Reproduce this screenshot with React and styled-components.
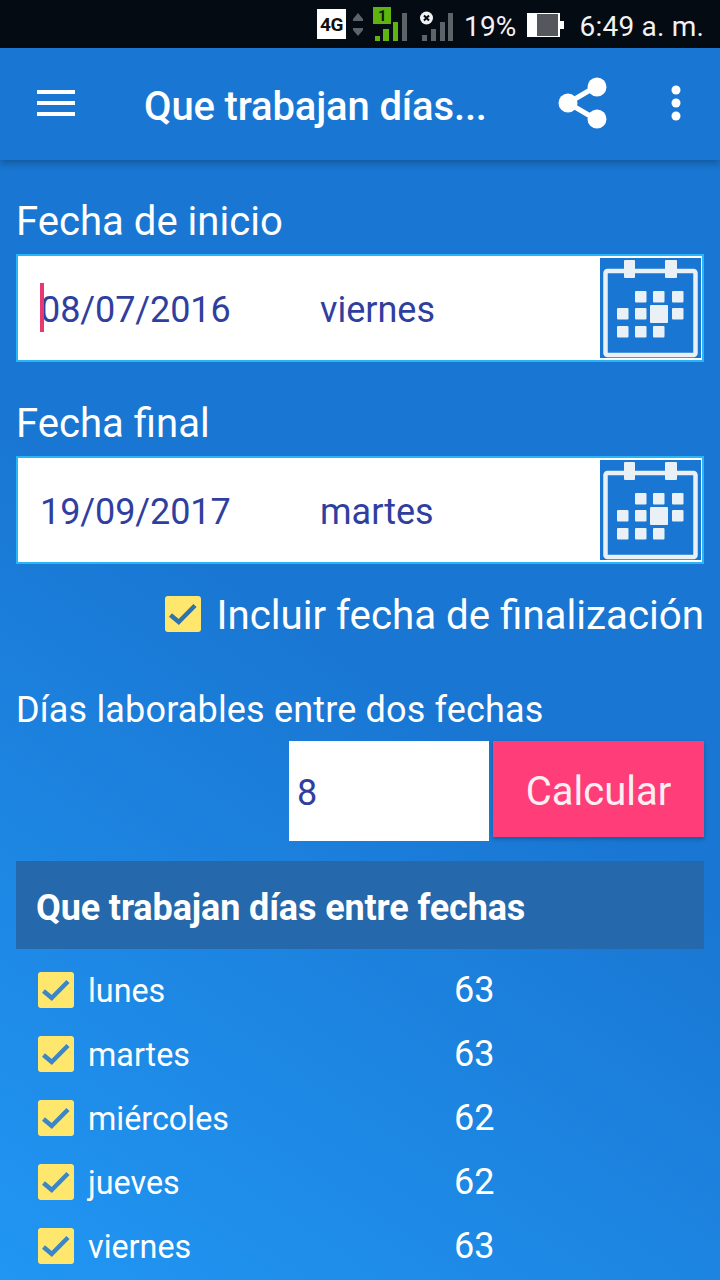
import styled, { createGlobalStyle } from "styled-components";

const Global = createGlobalStyle`
  html, body {
    margin: 0;
    padding: 0;
    background: #1976d2;
  }
  * { box-sizing: border-box; }
`;

const Screen = styled.div`
  width: 720px;
  height: 1280px;
  overflow: hidden;
  display: flex;
  flex-direction: column;
  font-family: Roboto, "Liberation Sans", sans-serif;
  color: #fff;
  background: linear-gradient(34deg, #2196f3 0%, #1976d2 50%, #1976d2 100%);
`;

const StatusBar = styled.div`
  height: 48px;
  flex: none;
  background: #050b13;
  display: flex;
  align-items: center;
  justify-content: flex-end;
  padding-right: 16px;
  color: #f2f2f2;
  font-size: 28px;
  letter-spacing: 0.2px;
`;

const NetBadge = styled.div`
  width: 29px;
  height: 30px;
  background: #fff;
  color: #111;
  font-size: 19px;
  font-weight: 700;
  display: grid;
  place-items: center;
  letter-spacing: -0.5px;
  margin-right: 3px;
`;

const StatusText = styled.span`
  margin-left: ${(p) => p.$left}px;
  padding-top: 4px;
`;

const StatusIcon = styled.svg`
  flex: none;
  display: block;
  margin-left: ${(p) => p.$left}px;
`;

const Toolbar = styled.header`
  height: 112px;
  flex: none;
  background: #1976d2;
  box-shadow: 0 3px 8px rgba(0, 0, 0, 0.28);
  display: flex;
  align-items: center;
  position: relative;
  z-index: 1;
`;

const MenuButton = styled.div`
  width: 144px;
  flex: none;
  padding-left: 37px;
  display: flex;
  flex-direction: column;
  gap: 7px;
  margin-top: -2px;
`;

const MenuLine = styled.div`
  width: 38px;
  height: 4px;
  background: #fff;
`;

const ToolbarTitle = styled.h1`
  margin: 0;
  flex: 1;
  padding-top: 4px;
  font-size: 40px;
  font-weight: 500;
  letter-spacing: -0.15px;
`;

const ShareIcon = styled.svg`
  flex: none;
  display: block;
  margin-right: 62px;
  margin-top: -2px;
`;

const MoreIcon = styled.svg`
  flex: none;
  display: block;
  margin-right: 38px;
  margin-top: -2px;
`;

const Body = styled.main`
  flex: 1;
  padding: 0 16px;
  display: flex;
  flex-direction: column;
`;

const Label = styled.div`
  font-size: 40.1px;
  line-height: 44px;
  margin-top: 40px;
`;

const DateField = styled.div`
  height: 108px;
  margin-top: 10px;
  background: #fff;
  border: 2px solid #29b6f6;
  display: flex;
  align-items: center;
  position: relative;
  color: #303f9f;
  font-size: 36px;
`;

const DateValue = styled.span`
  width: 280px;
  margin-left: 22px;
  flex: none;
  padding-top: 4px;
  letter-spacing: -0.1px;
`;

const DayValue = styled.span`
  flex: 1;
  padding-top: 4px;
`;

const Caret = styled.div`
  position: absolute;
  left: 22px;
  top: 27px;
  width: 4px;
  height: 49px;
  background: #e8386f;
`;

const CalendarBox = styled.svg`
  width: 101px;
  height: 100px;
  margin-right: 1px;
  flex: none;
  display: block;
`;

const IncludeRow = styled.div`
  display: flex;
  justify-content: flex-end;
  align-items: center;
  gap: 15px;
  margin-top: 28px;
  height: 44px;
  font-size: 40.25px;
`;

const IncludeText = styled.span`
  padding-top: 2px;
`;

const Check = styled.div`
  width: 36px;
  height: 36px;
  flex: none;
  background: #ffe76e;
  border-radius: 3px;
  display: grid;
  place-items: center;
`;

const Heading = styled.div`
  margin-top: 52px;
  padding-top: 1px;
  font-size: 36px;
  line-height: 43px;
  letter-spacing: 0.16px;
`;

const CalcRow = styled.div`
  display: flex;
  justify-content: flex-end;
  align-items: flex-start;
  gap: 4px;
  margin-top: 9px;
`;

const NumberBox = styled.div`
  width: 200px;
  height: 100px;
  background: #fff;
  color: #303f9f;
  font-size: 36px;
  padding: 4px 0 0 8px;
  display: flex;
  align-items: center;
`;

const CalcButton = styled.div`
  width: 211px;
  height: 96px;
  padding-top: 4px;
  background: #ff3d78;
  box-shadow: 0 2px 4px rgba(0, 0, 0, 0.25);
  display: grid;
  place-items: center;
  font-size: 40px;
  color: #fdeef3;
`;

const SummaryHeader = styled.div`
  margin-top: 20px;
  height: 88px;
  background: #2568ab;
  padding: 6px 0 0 20px;
  display: flex;
  align-items: center;
  font-size: 36px;
  font-weight: 700;
  letter-spacing: -0.13px;
`;

const List = styled.div`
  display: flex;
  flex-direction: column;
  padding: 23px 0 0 22px;
  gap: 28px;
`;

const DayRow = styled.div`
  height: 36px;
  display: flex;
  align-items: center;
  font-size: 32.3px;
`;

const DayName = styled.span`
  width: 366px;
  margin-left: 14px;
  padding-top: 2px;
  flex: none;
`;

const DayCount = styled.span`
  font-size: 36px;
`;

const Tick = ({ color }) => (
  <svg width="36" height="36" viewBox="0 0 36 36">
    <path d="M5.5 19l8.2 7L30 9.5" fill="none" stroke={color} strokeWidth="4.5" />
  </svg>
);

const CalendarIcon = () => {
  const dots = [
    [35, 33], [53, 33], [72, 33],
    [17, 50], [35, 50], [72, 50],
    [17, 68], [35, 68], [53, 68],
  ];
  return (
    <CalendarBox viewBox="0 0 101 100">
      <rect width="101" height="100" fill="#1976d2" />
      <rect x="5.5" y="13" width="90" height="84" rx="2" fill="none" stroke="#e9f0f6" strokeWidth="4.5" />
      <rect x="24" y="2" width="11" height="18" rx="1" fill="#e9f0f6" />
      <rect x="65" y="2" width="12" height="18" rx="1" fill="#e9f0f6" />
      {dots.map(([x, y]) => (
        <rect key={`${x}-${y}`} x={x} y={y} width="11.5" height="11.5" rx="1" fill="#e9f0f6" />
      ))}
      <rect x="50" y="47" width="18" height="18" rx="1" fill="#e9f0f6" />
    </CalendarBox>
  );
};

const days = [
  ["lunes", 63],
  ["martes", 63],
  ["miércoles", 62],
  ["jueves", 62],
  ["viernes", 63],
];

const App = () => {
  return (
    <Screen>
      <Global />
      <StatusBar>
        <NetBadge>4G</NetBadge>
        <StatusIcon $left={2} width="14" height="30" viewBox="0 0 14 30">
          <path d="M7 4l5 6v2H2v-2zM2 19h10v2l-5 6-5-6z" fill="#5d6468" />
        </StatusIcon>
        <StatusIcon $left={8} width="36" height="38" viewBox="0 0 36 38">
          <rect x="0" y="2" width="18" height="17" fill="#5fb30f" />
          <text x="5" y="16" fontSize="15" fontWeight="700" fill="#0a1a05" fontFamily="Roboto">1</text>
          <rect x="2" y="31" width="5" height="5" fill="#5fb30f" />
          <rect x="10" y="24" width="6" height="12" fill="#5fb30f" />
          <rect x="20" y="17" width="5" height="19" fill="#5fb30f" />
          <rect x="29" y="8" width="5" height="28" fill="#5d6468" />
        </StatusIcon>
        <StatusIcon $left={11} width="34" height="38" viewBox="0 0 34 38">
          <circle cx="6.5" cy="13" r="6.5" fill="#f2f2f2" />
          <path d="M4 10.5l5 5M9 10.5l-5 5" stroke="#050b13" strokeWidth="2" />
          <rect x="2" y="30" width="5" height="6" fill="#5d6468" />
          <rect x="11" y="24" width="5" height="12" fill="#5d6468" />
          <rect x="20" y="17" width="5" height="19" fill="#5d6468" />
          <rect x="28" y="8" width="5" height="28" fill="#5d6468" />
        </StatusIcon>
        <StatusText $left={10}>19%</StatusText>
        <StatusIcon $left={10} width="38" height="28" viewBox="0 0 38 28">
          <rect x="0" y="3" width="33" height="24" fill="#fff" />
          <rect x="10" y="4" width="21" height="22" fill="#54585c" />
          <rect x="32" y="11" width="5" height="8" fill="#fff" />
        </StatusIcon>
        <StatusText $left={15}>6:49 a. m.</StatusText>
      </StatusBar>

      <Toolbar>
        <MenuButton>
          <MenuLine />
          <MenuLine />
          <MenuLine />
        </MenuButton>
        <ToolbarTitle>Que trabajan días...</ToolbarTitle>
        <ShareIcon width="50" height="52" viewBox="0 0 50 52">
          <path d="M39 9L10 26l29 17" fill="none" stroke="#fff" strokeWidth="5" />
          <circle cx="39" cy="10" r="9.5" fill="#fff" />
          <circle cx="10" cy="26" r="9.5" fill="#fff" />
          <circle cx="39" cy="42" r="9.5" fill="#fff" />
        </ShareIcon>
        <MoreIcon width="12" height="36" viewBox="0 0 12 36">
          <circle cx="6" cy="5" r="4.5" fill="#fff" />
          <circle cx="6" cy="18" r="4.5" fill="#fff" />
          <circle cx="6" cy="31" r="4.5" fill="#fff" />
        </MoreIcon>
      </Toolbar>

      <Body>
        <Label>Fecha de inicio</Label>
        <DateField>
          <Caret />
          <DateValue>08/07/2016</DateValue>
          <DayValue>viernes</DayValue>
          <CalendarIcon />
        </DateField>

        <Label>Fecha final</Label>
        <DateField>
          <DateValue>19/09/2017</DateValue>
          <DayValue>martes</DayValue>
          <CalendarIcon />
        </DateField>

        <IncludeRow>
          <Check>
            <Tick color="#2f72ac" />
          </Check>
          <IncludeText>Incluir fecha de finalización</IncludeText>
        </IncludeRow>

        <Heading>Días laborables entre dos fechas</Heading>
        <CalcRow>
          <NumberBox>8</NumberBox>
          <CalcButton>Calcular</CalcButton>
        </CalcRow>

        <SummaryHeader>Que trabajan días entre fechas</SummaryHeader>
        <List>
          {days.map(([name, count]) => (
            <DayRow key={name}>
              <Check>
                <Tick color="#3a86c8" />
              </Check>
              <DayName>{name}</DayName>
              <DayCount>{count}</DayCount>
            </DayRow>
          ))}
        </List>
      </Body>
    </Screen>
  );
};

export default App;
